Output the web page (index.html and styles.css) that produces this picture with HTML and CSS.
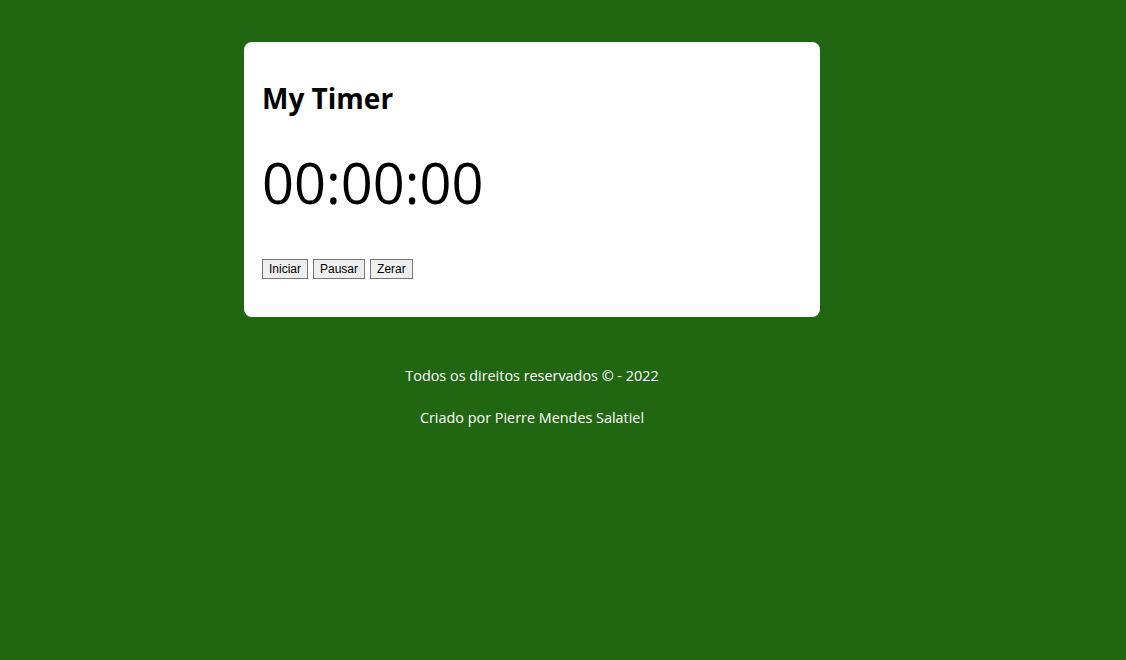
FILE: index.html
```html
<!DOCTYPE html>
<html lang="pt">
<head>
<meta charset="utf-8">
<title>My Timer</title>
<link rel="stylesheet" href="styles.css">
</head>
<body>
<main class="wrap">
  <section class="card">
    <h1 class="title">My Timer</h1>
    <div class="clock">00:00:00</div>
    <div class="controls">
      <button class="btn">Iniciar</button>
      <button class="btn">Pausar</button>
      <button class="btn">Zerar</button>
    </div>
  </section>
  <footer class="footer">
    <p>Todos os direitos reservados © - 2022</p>
    <p>Criado por Pierre Mendes Salatiel</p>
  </footer>
</main>
</body>
</html>
```
FILE: styles.css
```css
html, body {
  margin: 0;
  padding: 0;
}
body {
  background: #216611;
  font-family: "Open Sans", sans-serif;
  min-height: 660px;
}
.wrap {
  width: 576px;
  margin-left: 244px;
  padding-top: 42px;
}
.card {
  background: #fff;
  border-radius: 8px;
  padding: 18px 18px 38px 18px;
}
.title {
  margin: 0;
  padding-top: 18px;
  font-size: 28px;
  font-weight: 700;
  line-height: 40px;
  color: #000;
}
.clock {
  margin-top: 24px;
  font-size: 56px;
  line-height: 80px;
  color: #000;
}
.controls {
  margin-top: 37px;
  display: flex;
  gap: 5px;
}
.btn {
  font-family: Arial, "Liberation Sans", sans-serif;
  font-size: 12px;
  padding: 1px 6px 1px 6px;
  border: 1px solid #767676;
  border-radius: 0;
  background: #efefef;
  color: #000;
  line-height: 16px;
}
.footer {
  text-align: center;
  color: #fff;
  font-size: 14.4px;
  padding-top: 49px;
}
.footer p {
  margin: 0 0 22px 0;
  line-height: 20px;
}
```
